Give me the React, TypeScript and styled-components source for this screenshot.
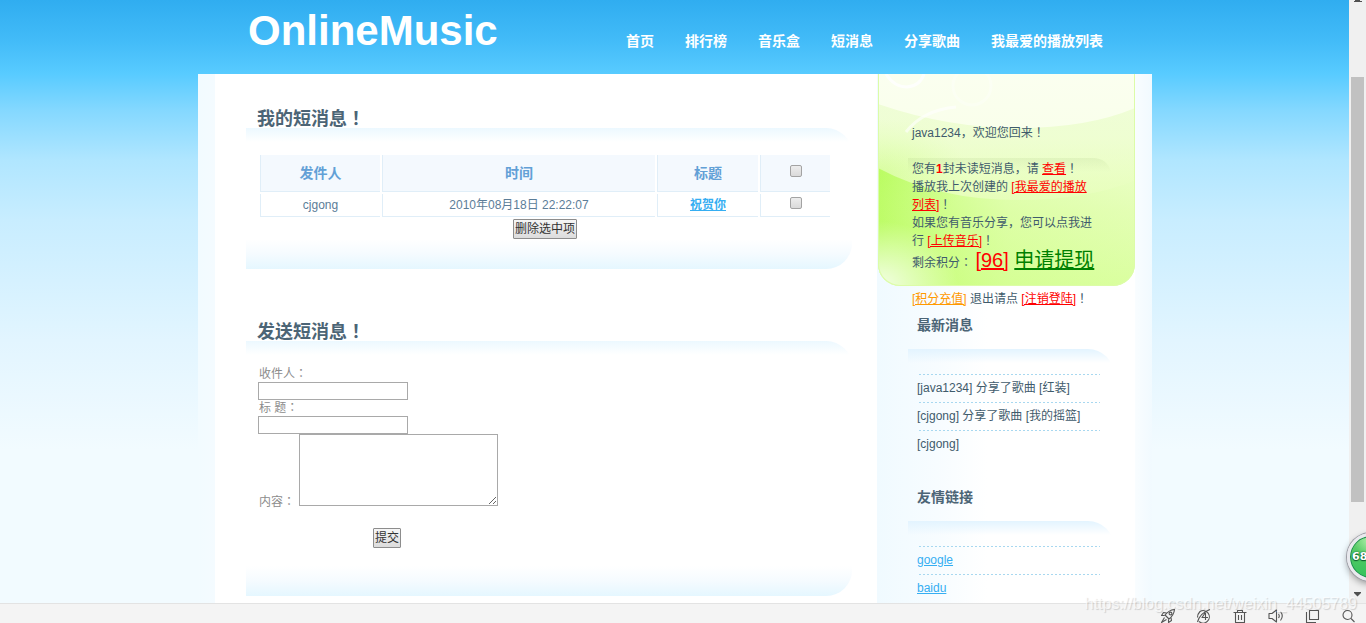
import React from "react";
import styled, { createGlobalStyle } from "styled-components";

const GlobalStyle = createGlobalStyle`
  * { box-sizing: border-box; }
  body {
    margin: 0;
    font: 12px/18px "Liberation Sans", "Noto Sans CJK SC", sans-serif;
    color: #3f5b6c;
  }
  h1, h2, h3, p, ul { margin: 0; padding: 0; }
  ul { list-style: none; }
`;

const Window = styled.div`
  display: flex;
  flex-direction: column;
  height: 100vh;
  overflow: hidden;
  position: relative;
`;

const Viewport = styled.div`
  flex: 1;
  min-height: 0;
  display: flex;
`;

const Page = styled.div`
  flex: 1;
  min-width: 0;
  overflow: hidden;
  padding-left: 1px;
  background: linear-gradient(
    #30adf0 0, #42bbf8 40px, #58cbff 74px, #84d8ff 110px, #b0e6ff 160px,
    #c8edff 220px, #e2f5ff 340px, #f2fbff 450px, #f2fbff 100%
  );
`;

const Container = styled.div`
  max-width: 954px;
  margin: 0 auto;
`;

const Header = styled.header`
  height: 74px;
  padding: 0 48px 0 50px;
  display: flex;
  justify-content: space-between;
  align-items: flex-start;
`;

const Logo = styled.h1`
  color: #fff;
  font-size: 42px;
  line-height: 62px;
  font-weight: bold;
`;

const Nav = styled.nav`
  display: flex;
  gap: 31px;
  padding: 31px 1px 0 0;
`;

const NavLink = styled.a`
  color: #fff;
  font-size: 14px;
  line-height: 20px;
  font-weight: bold;
  text-decoration: none;
  white-space: nowrap;
`;

const Body = styled.div`
  display: flex;
  padding: 0 17px;
  background: linear-gradient(90deg, #f2fbff, #f4fbff 17px, #f9fdff calc(100% - 17px), #f1faff);
`;

const Main = styled.main`
  flex: 1;
  min-width: 0;
  padding: 34px 25px 40px 31px;
  background: #fff;
`;

/* Full-width punctuation is set centred in its em square. */
const Mark = styled.span`
  font-family: "Noto Sans CJK TC", sans-serif;
  line-height: 1;
`;

const PanelTitle = styled.h2`
  height: 20px;
  padding-left: 11px;
  font-size: 18px;
  line-height: 20px;
  color: #4c6576;
`;

const Panel = styled.section`
  margin-bottom: 52px;
  padding: 25px 20px 30px 12px;
  border-radius: 0 26px 26px 0;
  background:
    linear-gradient(#ecf8ff, #fff) top / 100% 14px no-repeat,
    linear-gradient(#fff, #f5fbff 50%, #e5f7ff) bottom / 100% 30px no-repeat;
`;

const Table = styled.table`
  width: 100%;
  table-layout: fixed;
  border-spacing: 2px;
  text-align: center;
`;

const Col = styled.col<{ $w?: number }>`
  ${(p) => (p.$w ? `width: ${p.$w}px;` : "")}
`;

const Th = styled.th`
  height: 37px;
  padding: 0;
  font-size: 14px;
  color: #62a0d6;
  background: #f4f9fe;
  border: 1px solid #e0eef8;
  border-width: 0 0 1px 1px;
`;

const Td = styled.td`
  height: 23px;
  padding: 0;
  color: #5c7d98;
  border: 1px solid #e0eef8;
  border-width: 0 0 1px 1px;
`;

const Check = styled.input`
  appearance: none;
  display: block;
  width: 12px;
  height: 12px;
  margin: 0 auto 4px;
  border: 1px solid #a3a3a3;
  border-radius: 2px;
  background: linear-gradient(#ededed, #dadada);
`;

const TitleLink = styled.a`
  color: #35aef2;
  font-weight: bold;
`;

const Button = styled.button`
  display: block;
  height: 20px;
  margin: 0 auto;
  padding: 0 1px;
  border: 1px solid #8d8d8d;
  border-radius: 1px;
  background: linear-gradient(#f6f6f6, #dcdcdc);
  color: #333;
  font: inherit;
`;

const Form = styled.form`
  min-height: 200px;
`;

const Label = styled.label`
  display: block;
  padding-left: 1px;
  line-height: 16px;
  color: #8c8c8c;
`;

const TextInput = styled.input`
  display: block;
  width: 150px;
  height: 18px;
  padding: 0 2px;
  border: 1px solid #a9a9a9;
  font: inherit;
`;

const ContentRow = styled.div`
  height: 72px;
`;

const ContentLabel = styled(Label)`
  display: inline-block;
  width: 41px;
`;

const TextArea = styled.textarea`
  width: 199px;
  height: 72px;
  border: 1px solid #a9a9a9;
  font: inherit;
`;

const Submit = styled.div`
  width: 258px;
  padding-top: 22px;
`;

const Sidebar = styled.aside`
  position: relative;
  width: 258px;
  flex-shrink: 0;
  padding: 50px 21px 0 31px;
  background: linear-gradient(90deg, #f0faff, #f7fcff 60px, #fff 110px);
`;

const Glow = styled.svg`
  position: absolute;
  top: 0;
  left: 1px;
  display: block;
`;

const Account = styled.div`
  position: relative;
  padding-left: 4px;
  white-space: nowrap;
`;

const Paragraph = styled.p`
  margin-bottom: 18px;
`;

const Points = styled.p`
  font-size: 20px;
  line-height: 20px;
  margin-bottom: 17px;
`;

const PointsLabel = styled.span`
  font-size: 12px;
`;

const AccountLink = styled.a<{ $color?: string }>`
  color: ${(p) => p.$color ?? "#f00"};
`;

const Count = styled.b`
  color: #f00;
`;

const SideTitle = styled.h3`
  padding: 7px 0 14px 9px;
  font-size: 14px;
  line-height: 20px;
  color: #4c6576;
`;

const SideList = styled.ul`
  min-height: 131px;
  padding: 25px 14px 0 9px;
  border-radius: 0 26px 0 0;
  background: linear-gradient(#e3f4ff, #ffffff00) top / 100% 14px no-repeat;
`;

const SideItem = styled.li`
  height: 28px;
  padding-top: 1px;
  line-height: 27px;
  background: repeating-linear-gradient(90deg, transparent 0 2px, #a8d8f0 2px 4px) top / 100% 1px no-repeat;
`;

const SideLink = styled.a`
  color: #35aef2;
`;

const ScrollTrack = styled.div`
  width: 17px;
  flex-shrink: 0;
  display: flex;
  flex-direction: column;
  align-items: center;
  background: #f0f0f0;
`;

const ScrollThumb = styled.div`
  width: 13px;
  flex: 425;
  background: #c1c1c1;
`;

const TrackGap = styled.div<{ $grow: number }>`
  flex: ${(p) => p.$grow};
`;

const StatusBar = styled.footer`
  height: 20px;
  flex-shrink: 0;
  display: flex;
  justify-content: flex-end;
  gap: 20px;
  padding: 4px 10px 0 0;
  border-top: 1px solid #e3e3e3;
  background: #f4f4f4;
`;

const IconButton = styled.button`
  width: 16px;
  height: 16px;
  padding: 0;
  border: 0;
  background: none;
`;

const Watermark = styled.div`
  position: absolute;
  right: 9px;
  bottom: 9px;
  font-size: 16px;
  line-height: 20px;
  color: #ffffffb0;
  text-shadow: 1px 1px 1px #00000028;
  pointer-events: none;
`;

const Badge = styled.div`
  position: absolute;
  right: -29px;
  bottom: 42px;
  width: 48px;
  height: 48px;
  padding-left: 2px;
  border: 3px solid #e9e9ee;
  border-radius: 50%;
  background:
    radial-gradient(circle at 50% 8%, #b5f3b0, transparent 40%),
    linear-gradient(#67cf6d, #34c25a);
  box-shadow: 0 0 0 1px #9c9ca4, 0 3px 7px #00000060, inset 0 0 0 1px #1c8a50;
  color: #fff;
  font: bold 11px/42px "DejaVu Sans", sans-serif;
  text-shadow: 0 0 2px #0b5a2a, 0 1px 1px #0b5a2a;
`;

const nav = ["首页", "排行榜", "音乐盒", "短消息", "分享歌曲", "我最爱的播放列表"];

function Icon({ label, children }: { label: string; children: React.ReactNode }) {
  return (
    <IconButton type="button" aria-label={label}>
      <svg width="16" height="16" viewBox="0 0 16 16" fill="none" stroke="#555" strokeWidth="1.1" strokeLinejoin="round">
        {children}
      </svg>
    </IconButton>
  );
}

function GreenGlow() {
  return (
    <Glow width="257" height="212" viewBox="0 0 257 212" aria-hidden="true">
      <defs>
        <linearGradient id="base" x1="0" y1="0" x2="0" y2="1">
          <stop offset="0" stopColor="#fbfff0" />
          <stop offset="0.3" stopColor="#f9ffea" />
          <stop offset="0.65" stopColor="#e8fec0" />
          <stop offset="1" stopColor="#dbffa2" />
        </linearGradient>
        <linearGradient id="wave" x1="0" y1="0" x2="0" y2="1">
          <stop offset="0" stopColor="#e8fcc8" stopOpacity="0.6" />
          <stop offset="1" stopColor="#e0ffa6" stopOpacity="0.4" />
        </linearGradient>
        <radialGradient id="left">
          <stop offset="0" stopColor="#b4fb55" />
          <stop offset="1" stopColor="#c9ff80" stopOpacity="0" />
        </radialGradient>
        <radialGradient id="corner">
          <stop offset="0" stopColor="#fff" stopOpacity="0.85" />
          <stop offset="1" stopColor="#fff" stopOpacity="0" />
        </radialGradient>
        <linearGradient id="lower" x1="0" y1="0" x2="1" y2="0">
          <stop offset="0" stopColor="#b8fc5c" stopOpacity="0.9" />
          <stop offset="0.5" stopColor="#ccff80" stopOpacity="0.4" />
          <stop offset="1" stopColor="#d8ff98" stopOpacity="0.3" />
        </linearGradient>
        <linearGradient id="bar" x1="0" y1="0" x2="0" y2="1">
          <stop offset="0" stopColor="#a8c880" stopOpacity="0.18" />
          <stop offset="1" stopColor="#a8c880" stopOpacity="0" />
        </linearGradient>
        <clipPath id="card">
          <path d="M0 0H257V190A22 22 0 0 1 235 212H22A22 22 0 0 1 0 190Z" />
        </clipPath>
      </defs>
      <g clipPath="url(#card)">
        <rect width="257" height="212" fill="url(#base)" />
        <path d="M0 30Q70 54 140 54Q210 54 257 34V106Q210 126 140 126Q60 126 0 94Z" fill="url(#wave)" />
        <path d="M0 94Q60 126 140 126Q210 126 257 106V212H0Z" fill="url(#lower)" />
        <ellipse cx="0" cy="100" rx="90" ry="55" fill="url(#left)" fillOpacity="0.35" />
        <ellipse cx="0" cy="212" rx="80" ry="65" fill="url(#corner)" />
        <g fill="none" stroke="#fff" strokeOpacity="0.8" strokeWidth="3">
          <path d="M8 0Q16 13 29 13Q42 12 46 0" />
          <path d="M28 58Q45 36 78 33" strokeOpacity="0.6" />
          <circle cx="94" cy="12" r="19" strokeOpacity="0.3" />
        </g>
        <path d="M30 84H215Q229 84 233 98H30Z" fill="url(#bar)" />
        <path d="M0 0V190A22 22 0 0 0 22 212H235A22 22 0 0 0 257 190V0" fill="none" stroke="#dcfca8" strokeWidth="2" />
      </g>
    </Glow>
  );
}

export default function App() {
  return (
    <Window>
      <GlobalStyle />
      <Viewport>
        <Page>
          <Container>
            <Header>
              <Logo>OnlineMusic</Logo>
              <Nav>
                {nav.map((item) => (
                  <NavLink href="#" key={item}>{item}</NavLink>
                ))}
              </Nav>
            </Header>
            <Body>
              <Main>
                <PanelTitle>我的短消息<Mark>！</Mark></PanelTitle>
                <Panel>
                  <Table>
                    <colgroup>
                      <Col $w={120} />
                      <Col />
                      <Col $w={101} />
                      <Col $w={70} />
                    </colgroup>
                    <thead>
                      <tr>
                        <Th>发件人</Th>
                        <Th>时间</Th>
                        <Th>标题</Th>
                        <Th><Check type="checkbox" aria-label="全选" /></Th>
                      </tr>
                    </thead>
                    <tbody>
                      <tr>
                        <Td>cjgong</Td>
                        <Td>2010年08月18日 22:22:07</Td>
                        <Td><TitleLink href="#">祝贺你</TitleLink></Td>
                        <Td><Check type="checkbox" aria-label="祝贺你" /></Td>
                      </tr>
                    </tbody>
                  </Table>
                  <Button type="button">删除选中项</Button>
                </Panel>
                <PanelTitle>发送短消息<Mark>！</Mark></PanelTitle>
                <Panel>
                  <Form>
                    <Label htmlFor="to">收件人<Mark>：</Mark></Label>
                    <TextInput id="to" />
                    <Label htmlFor="subject">标 题<Mark>：</Mark></Label>
                    <TextInput id="subject" />
                    <ContentRow>
                      <ContentLabel htmlFor="content">内容<Mark>：</Mark></ContentLabel>
                      <TextArea id="content" />
                    </ContentRow>
                    <Submit><Button type="button">提交</Button></Submit>
                  </Form>
                </Panel>
              </Main>
              <Sidebar>
                <GreenGlow />
                <Account>
                  <Paragraph>java1234，欢迎您回来<Mark>！</Mark></Paragraph>
                  <p>
                    您有<Count>1</Count>封未读短消息，请 <AccountLink href="#">查看</AccountLink><Mark>！</Mark><br />
                    播放我上次创建的 <AccountLink href="#">[我最爱的播放<br />列表]</AccountLink><Mark>！</Mark><br />
                    如果您有音乐分享，您可以点我进<br />
                    行 <AccountLink href="#">[上传音乐]</AccountLink><Mark>！</Mark>
                  </p>
                  <Points>
                    <PointsLabel>剩余积分<Mark>：</Mark> </PointsLabel>
                    <AccountLink href="#">[96]</AccountLink>{" "}
                    <AccountLink href="#" $color="#008000">申请提现</AccountLink>
                  </Points>
                  <p>
                    <AccountLink href="#" $color="#ff9900">[积分充值]</AccountLink> 退出请点{" "}
                    <AccountLink href="#">[注销登陆]</AccountLink><Mark>！</Mark>
                  </p>
                </Account>
                <SideTitle>最新消息</SideTitle>
                <SideList>
                  <SideItem>[java1234] 分享了歌曲 [红装]</SideItem>
                  <SideItem>[cjgong] 分享了歌曲 [我的摇篮]</SideItem>
                  <SideItem>[cjgong]</SideItem>
                </SideList>
                <SideTitle>友情链接</SideTitle>
                <SideList>
                  <SideItem><SideLink href="#">google</SideLink></SideItem>
                  <SideItem><SideLink href="#">baidu</SideLink></SideItem>
                </SideList>
              </Sidebar>
            </Body>
          </Container>
        </Page>
        <ScrollTrack>
          <svg width="9" height="3" viewBox="0 0 9 3"><path d="M2 0H7V1H9V2H1V1H2Z" fill="#505050" /></svg>
          <TrackGap $grow={74} />
          <ScrollThumb />
          <TrackGap $grow={89} />
          <svg width="9" height="12" viewBox="0 0 9 12"><path d="M1 1H8V2L4.500 5.500L1 2Z" fill="#505050" /></svg>
        </ScrollTrack>
      </Viewport>
      <StatusBar>
        <Icon label="加速">
          <path d="M14.500 1.500Q9 2 5 7L9 11Q14 7 14.500 1.500ZM6.500 5L3.500 4.500L1.500 7.500H4.500M11 9.500L11.500 12.500L8.500 14.500V11.500M4.500 9.500L1.500 14.500L6.500 11.500" />
          <circle cx="10.500" cy="5.500" r="1.400" />
        </Icon>
        <Icon label="浏览器">
          <path d="M3 13.500A6.200 6.200 0 1 0 4 3.500Q1.500 6 1.500 9.500M1.500 14Q4 5 14 1.500M5.500 9.500H12M9.500 4.500L6 9.500M9.500 5V12" />
        </Icon>
        <Icon label="清理">
          <path d="M1.500 4.500H14.500M5.500 4V2.500H10.500V4M3.500 5V14.500H12.500V5M6.500 7V12M9.500 7V12" />
        </Icon>
        <Icon label="声音">
          <path d="M1 5.500H4L8.500 2V14L4 10.500H1ZM10.500 6Q12 8 10.500 10M12.500 3.500Q16 8 12.500 12.500" />
        </Icon>
        <Icon label="窗口">
          <path d="M5.500 2.500H14.500V11.500H5.500ZM2.500 4V14.500H12" />
        </Icon>
        <Icon label="搜索">
          <circle cx="7.500" cy="7" r="4.500" />
          <path d="M11 10.500L14.500 14" />
        </Icon>
      </StatusBar>
      <Badge>68</Badge>
      <Watermark>https://blog.csdn.net/weixin_44505789</Watermark>
    </Window>
  );
}
